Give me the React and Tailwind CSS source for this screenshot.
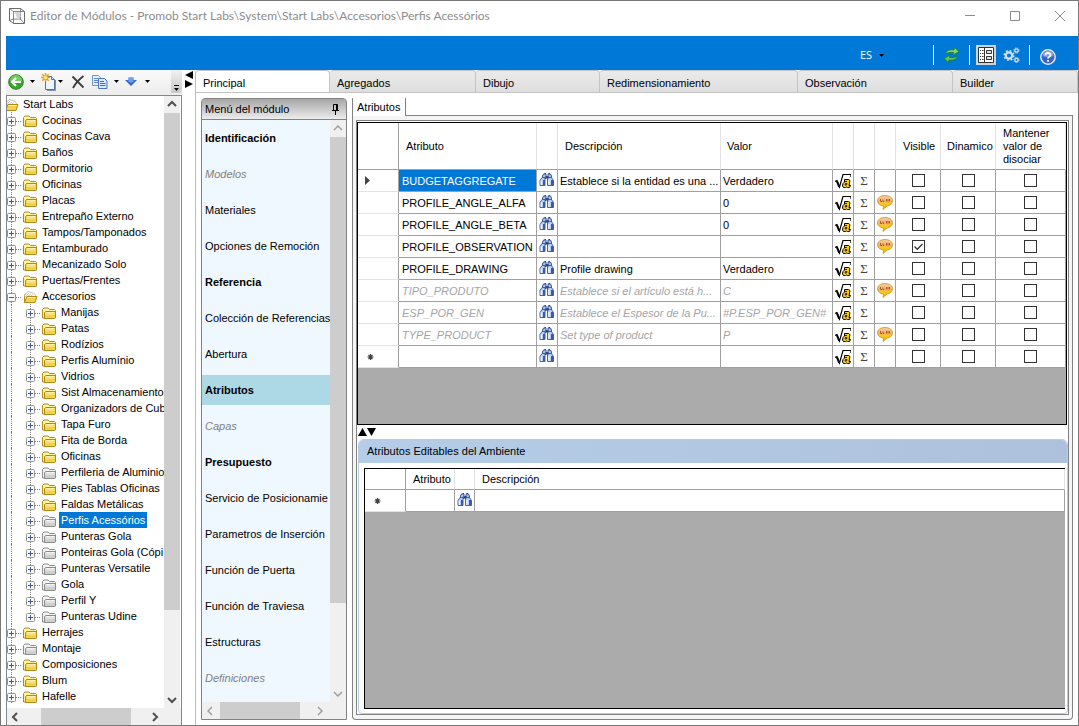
import { useState } from 'react';
import clsx from 'clsx';

const tree = [
  { name: 'Cocinas' },
  { name: 'Cocinas Cava' },
  { name: 'Baños' },
  { name: 'Dormitorio' },
  { name: 'Oficinas' },
  { name: 'Placas' },
  { name: 'Entrepaño Externo' },
  { name: 'Tampos/Tamponados' },
  { name: 'Entamburado' },
  { name: 'Mecanizado Solo' },
  { name: 'Puertas/Frentes' },
  {
    name: 'Accesorios',
    children: [
      { name: 'Manijas' },
      { name: 'Patas' },
      { name: 'Rodízios' },
      { name: 'Perfis Alumínio' },
      { name: 'Vidrios' },
      { name: 'Sist Almacenamiento' },
      { name: 'Organizadors de Cub' },
      { name: 'Tapa Furo' },
      { name: 'Fita de Borda' },
      { name: 'Oficinas' },
      { name: 'Perfileria de Aluminio', gray: true },
      { name: 'Pies Tablas Oficinas' },
      { name: 'Faldas Metálicas' },
      { name: 'Perfis Acessórios', gray: true },
      { name: 'Punteras Gola', gray: true },
      { name: 'Ponteiras Gola (Cópi', gray: true },
      { name: 'Punteras Versatile', gray: true },
      { name: 'Gola', gray: true },
      { name: 'Perfil Y', gray: true },
      { name: 'Punteras Udine', gray: true },
    ],
  },
  { name: 'Herrajes' },
  { name: 'Montaje', gray: true },
  { name: 'Composiciones' },
  { name: 'Blum' },
  { name: 'Hafelle' },
];

const menu = [
  { label: 'Identificación', kind: 'title' },
  { label: 'Modelos', kind: 'off' },
  { label: 'Materiales' },
  { label: 'Opciones de Remoción' },
  { label: 'Referencia', kind: 'title' },
  { label: 'Colección de Referencias' },
  { label: 'Abertura' },
  { label: 'Atributos', kind: 'title' },
  { label: 'Capas', kind: 'off' },
  { label: 'Presupuesto', kind: 'title' },
  { label: 'Servicio de Posicionamie' },
  { label: 'Parametros de Inserción' },
  { label: 'Función de Puerta' },
  { label: 'Función de Traviesa' },
  { label: 'Estructuras' },
  { label: 'Definiciones', kind: 'off' },
];

const tabs = [
  { label: 'Principal', size: 'w-[134px]' },
  { label: 'Agregados', size: 'w-[146px]' },
  { label: 'Dibujo', size: 'w-[124px]' },
  { label: 'Redimensionamiento', size: 'w-[198px]' },
  { label: 'Observación', size: 'w-[155px]' },
  { label: 'Builder', size: 'flex-1' },
];

const rows = [
  { name: 'BUDGETAGGREGATE', desc: 'Establece si la entidad es una ...', value: 'Verdadero', selected: true },
  { name: 'PROFILE_ANGLE_ALFA', value: '0', note: true },
  { name: 'PROFILE_ANGLE_BETA', value: '0', note: true },
  { name: 'PROFILE_OBSERVATION', note: true, visible: true },
  { name: 'PROFILE_DRAWING', desc: 'Profile drawing', value: 'Verdadero' },
  { name: 'TIPO_PRODUTO', desc: 'Establece si el artículo está h...', value: 'C', note: true, inherited: true },
  { name: 'ESP_POR_GEN', desc: 'Establece el Espesor de la Pu...', value: '#P.ESP_POR_GEN#', inherited: true },
  { name: 'TYPE_PRODUCT', desc: 'Set type of product', value: 'P', note: true, inherited: true },
  { name: '', isNew: true },
];

/* ---------- icons ---------- */

function Caret({ className }) {
  return (
    <svg width="5" height="3" viewBox="0 0 5 3" className={className} aria-hidden="true">
      <path d="M0 0h5L2.5 3z" fill="currentColor" />
    </svg>
  );
}

function Folder({ gray, open }) {
  const line = gray ? '#8c8c8c' : '#b08a1c';
  const light = gray ? '#f4f4f4' : '#fff3a8';
  const dark = gray ? '#cfcfcf' : '#f3cf4b';
  if (open) {
    return (
      <svg width="15" height="14" viewBox="0 0 15 14" className="mt-[2px] shrink-0" aria-hidden="true">
        <path d="M1.500 12.500V5l1-1h3l1 1.500h5.500v2" fill={light} stroke={line} />
        <path d="M1 6l4-4.500 6.500 2L13 7z" fill="#fff" stroke="#c4b98e" strokeWidth=".8" />
        <path d="M3.500 5.500l2-2M5.500 6l2-2M8 6.500l1.500-2" stroke="#b4b4b4" strokeWidth=".8" />
        <path d="M1.500 12.500l2.500-6h10l-2 6z" fill={dark} stroke={line} />
        <path d="M4.500 7.500h8" stroke={light} />
      </svg>
    );
  }
  return (
    <svg width="15" height="14" viewBox="0 0 15 14" className="mt-[2px] shrink-0" aria-hidden="true">
      <path d="M.5 12V3.500l1.500-1.500h4l1.500 1.500h5l1 1V12z" fill={light} stroke={line} />
      <path d="M2.500 12.500v-6l1-1h10v6l-1 1z" fill={dark} stroke={line} />
      <path d="M4 6.500h8.500M3.500 8h9" stroke={light} />
    </svg>
  );
}

function Expander({ open, last }) {
  return (
    <svg width="16" height="16" viewBox="0 0 16 16" className="shrink-0" aria-hidden="true">
      <path d={last ? 'M4.500 0v5' : 'M4.500 0v16'} stroke="#808080" strokeDasharray="1 1" />
      <path d="M9 9.500h6" stroke="#808080" strokeDasharray="1 1" />
      <rect x=".5" y="5.500" width="8" height="8" rx="1" fill="#fbfbfb" stroke="#919191" />
      <path d={open ? 'M2 9.500h5' : 'M2 9.500h5M4.500 7v5'} stroke="#3c5aa0" />
    </svg>
  );
}

function Binoculars() {
  return (
    <svg width="16" height="16" viewBox="0 0 16 16" className="mx-auto mb-[2px] block" aria-hidden="true">
      <path d="M3.500 4l1-2h2.500v4.500h-3.500zM9 2h2.500l1 2v2.500H9z" fill="#a9c3ee" stroke="#2c4a8c" strokeWidth=".9" />
      <path d="M1 13.500v-5l2-3h3v8zM8.500 13.500v-8h4l2 3v5z" fill="#b8cdf0" stroke="#35549a" strokeWidth=".9" />
      <path d="M4 8h2v5.500H4zM12 8h2.300v5.500H12z" fill="#3a5aa6" />
      <path d="M6.500 4h3v2.500h-3z" fill="#2c4a8c" />
      <path d="M2.300 8.500v4.500M9.900 8v5" stroke="#f6faff" strokeWidth="1.200" />
      <path d="M5.500 1.500h1.500M9.500 1.500H11" stroke="#2c4a8c" />
    </svg>
  );
}

function Formula() {
  return (
    <svg width="16" height="16" viewBox="0 0 16 16" className="mx-auto block" aria-hidden="true">
      <path d="M0 8.500L2 7.500l2.500 6.500L8 1.500h8V4" fill="none" stroke="#000" strokeWidth="1.200" />
      <path d="M1.800 8l2.400 6" stroke="#000" strokeWidth="2" />
      <path
        d="M9.500 6.500h4l1.500 1-1 5h1.500l-1 2h-2l-1-.5-1 .5H8.500l-1-1.500.5-2.500 1.500-1.500z"
        fill="#ffcc14"
        stroke="#000"
        strokeLinejoin="round"
      />
      <path d="M9.500 8.500h2.500M10 12l.5-1.500h1.500l-.5 1.500z" fill="none" stroke="#000" strokeWidth=".8" />
    </svg>
  );
}

function Note() {
  return (
    <svg width="16" height="16" viewBox="0 0 16 16" className="mx-auto mb-[2px] block" aria-hidden="true">
      <defs>
        <linearGradient id="note" x1="0" y1="0" x2="0" y2="1">
          <stop offset="0" stopColor="#f4cfa4" />
          <stop offset=".4" stopColor="#f2b06c" />
          <stop offset=".6" stopColor="#fdc818" />
          <stop offset="1" stopColor="#eda600" />
        </linearGradient>
      </defs>
      <path
        d="M8 1.500c4.300 0 7.500 2 7.500 5.200s-2.500 4.800-5.500 5.300l-4 3.500.5-3.500C3 11.500.5 9.800.5 6.700c0-3.200 3.200-5.200 7.500-5.200z"
        fill="url(#note)"
        stroke="#cf9420"
        strokeWidth=".8"
      />
      <path d="M3.500 5v2.500h1.500M6 5.500v2h1.200M9.500 5v2.500M11 5v2.500M12.500 5v2.500" stroke="#a8501e" fill="none" strokeWidth=".9" />
    </svg>
  );
}

function Chevron({ dir, faded }) {
  const paths = {
    up: 'M1 6l4-4 4 4',
    down: 'M1 3l4 4 4-4',
    left: 'M6 1L2 5l4 4',
    right: 'M3 1l4 4-4 4',
  };
  return (
    <svg width="10" height="10" viewBox="0 0 10 10" aria-hidden="true">
      <path d={paths[dir]} fill="none" stroke={faded ? '#9b9b9b' : '#505050'} strokeWidth={faded ? 1.4 : 2} />
    </svg>
  );
}

function VScroll({ faded, thumb }) {
  return (
    <div className="flex w-4 shrink-0 flex-col bg-[#f0f0f0]">
      <button type="button" aria-label="Subir" className="flex h-[17px] items-center justify-center">
        <Chevron dir="up" faded={faded} />
      </button>
      <div className="min-h-0 flex-1">
        <div className={clsx('bg-[#cdcdcd]', thumb)} />
      </div>
      <button type="button" aria-label="Bajar" className="flex h-[17px] items-center justify-center">
        <Chevron dir="down" faded={faded} />
      </button>
    </div>
  );
}

function HScroll({ faded, thumb }) {
  return (
    <div className="flex h-[17px] min-w-0 flex-1 bg-[#f0f0f0]">
      <button type="button" aria-label="Izquierda" className="flex w-[18px] items-center justify-center">
        <Chevron dir="left" faded={faded} />
      </button>
      <div className="min-w-0 flex-1">
        <div className={clsx('h-full bg-[#cdcdcd]', thumb)} />
      </div>
      <button type="button" aria-label="Derecha" className="flex w-[18px] items-center justify-center">
        <Chevron dir="right" faded={faded} />
      </button>
    </div>
  );
}

/* ---------- window chrome ---------- */

function TitleBar() {
  return (
    <header className="flex h-[35px] shrink-0 items-center bg-white pr-3 pb-[5px] pl-2">
      <svg width="16" height="16" viewBox="0 0 16 16" fill="none" stroke="#6a6a6a" className="shrink-0" aria-hidden="true">
        <path d="M.5.500h11l4 3v12h-11l-4-3z" />
        <path d="M4.500 3.500h11M4.500 3.500v12M.5.500l4 3M11.500.500v11M.5 12.500l4-1.500h7l3.500 4" strokeWidth=".8" />
        <path d="M5.500 4h6v5l-3 2z" fill="#d5d5d5" stroke="none" />
      </svg>
      <h1 className="ml-[5px] flex-1 truncate font-['Lato',sans-serif] text-[12px] text-[#8c8c8c]">
        Editor de Módulos - Promob Start Labs\System\Start Labs\Accesorios\Perfis Acessórios
      </h1>
      <div className="flex gap-[33px] text-[#8c8c8c]">
        <button type="button" aria-label="Minimizar">
          <svg width="12" height="12" viewBox="0 0 12 12" stroke="currentColor"><path d="M1 5.500h10" /></svg>
        </button>
        <button type="button" aria-label="Maximizar">
          <svg width="12" height="12" viewBox="0 0 12 12" stroke="currentColor" fill="none"><path d="M1.500 1.500h9v9h-9z" /></svg>
        </button>
        <button type="button" aria-label="Cerrar">
          <svg width="12" height="12" viewBox="0 0 12 12" stroke="currentColor"><path d="M1 1l10 10M11 1L1 11" /></svg>
        </button>
      </div>
    </header>
  );
}

function TopBar() {
  return (
    <div className="ml-[5px] flex h-[34px] shrink-0 items-center justify-end bg-[#0078d7] pt-1 pr-[22px] text-white">
      <label className="relative mr-[49px] flex items-center">
        <select
          aria-label="Idioma"
          defaultValue="ES"
          className="w-6 appearance-none bg-transparent font-['Open_Sans',sans-serif] text-[11px] text-white"
        >
          <option>ES</option>
        </select>
        <Caret className="pointer-events-none absolute right-0 text-black" />
      </label>
      <span className="h-5 w-px bg-white" />
      <button type="button" aria-label="Actualizar" className="mx-[9px]">
        <svg width="17" height="16" viewBox="0 0 17 16" className="block" aria-hidden="true">
          <path d="M2.500 6.500C4 3 7 2.500 11 3L11.500.500 16 4.500 10 8l.5-2.500C7 5 5 6 2.500 6.500z" fill="#7ddb6c" stroke="#1d7d28" strokeWidth=".8" />
          <path d="M14.500 9.500C13 13 10 13.500 6 13l-.5 2.500L1 11.500 7 8l-.5 2.500c3.500.5 5.500-.5 8-1z" fill="#5cc74e" stroke="#1d7d28" strokeWidth=".8" />
        </svg>
      </button>
      <span className="h-5 w-px bg-white" />
      <button type="button" aria-label="Paneles" className="ml-[6px] flex h-5 w-5 items-center justify-center bg-[#ccd3df]">
        <svg width="16" height="16" viewBox="0 0 16 16" fill="none" stroke="#333" aria-hidden="true">
          <path d="M.5.500h15v15H.5z" fill="#fff" />
          <path d="M6.500.500v15" />
          <path d="M2 3.500h1M2 6.500h1M2 9.500h1M2 12.500h1M4 3.500h1.500M4 6.500h1.500M4 9.500h1.500M4 12.500h1.500" />
          <path d="M8.500 3.500h5v3h-5zM8.500 9.500h5v3h-5z" fill="#e4e4e4" />
        </svg>
      </button>
      <button type="button" aria-label="Configuración" className="mr-2 ml-[7px]">
        <svg width="18" height="17" viewBox="0 0 18 17" fill="none" stroke="#d6dde8" className="block" aria-hidden="true">
          <circle cx="6" cy="8.500" r="3.200" strokeWidth="2.200" />
          <circle cx="6" cy="8.500" r="4.800" strokeWidth="1.600" strokeDasharray="1.885 1.885" />
          <circle cx="13.500" cy="3.500" r="1.700" strokeWidth="1.300" />
          <circle cx="13.500" cy="3.500" r="2.600" strokeDasharray="1.020 1.020" />
          <circle cx="13.500" cy="13" r="1.700" strokeWidth="1.300" />
          <circle cx="13.500" cy="13" r="2.600" strokeDasharray="1.020 1.020" />
        </svg>
      </button>
      <span className="h-5 w-px bg-white" />
      <button type="button" aria-label="Ayuda" className="ml-[10px] pt-1">
        <svg width="16" height="16" viewBox="0 0 16 16" className="block" aria-hidden="true">
          <circle cx="8" cy="8" r="7.200" fill="#3a63c8" stroke="#e4eaf8" strokeWidth="1.500" />
          <path d="M2.500 7a5.500 5.500 0 0 1 11 0c-3 1.500-8 1.500-11 0z" fill="#7f9fe4" />
          <path d="M5.500 6.200c0-3 5-3 5-.2 0 1.700-2.500 1.700-2.500 3.500M8 11v1.800" fill="none" stroke="#fff" strokeWidth="1.800" />
        </svg>
      </button>
    </div>
  );
}

/* ---------- left column ---------- */

function ToolBar() {
  return (
    <div className="flex h-[25px] shrink-0 items-center bg-gradient-to-b from-[#fafafa] to-[#ececec] pb-[2px] pl-[2px]">
      <button type="button" aria-label="Volver">
        <svg width="16" height="16" viewBox="0 0 16 16" className="block" aria-hidden="true">
          <circle cx="8" cy="8" r="7.300" fill="#39a52c" stroke="#2c8424" />
          <path d="M2 7a6 6 0 0 1 12 0c-3 1.500-9 1.500-12 0z" fill="#6fce5c" />
          <path d="M13 8H4.500M8 4L4 8l4 4" fill="none" stroke="#fff" strokeWidth="2.200" />
        </svg>
      </button>
      <Caret className="mx-[6px]" />
      <button type="button" aria-label="Nuevo">
        <svg width="15" height="18" viewBox="0 0 15 18" className="block" aria-hidden="true">
          <path d="M4.500 3.500h6l3 3v10h-9z" fill="#eef4fd" stroke="#5c6f8f" />
          <path d="M10.500 3.500v3h3" fill="#cfdcf0" stroke="#5c6f8f" />
          <path d="M14.500 7v10.500H6" fill="none" stroke="#7f8fae" />
          <path d="M4.500 0v9M0 4.500h9M1.300 1.300l6.400 6.400M7.700 1.300L1.300 7.700" stroke="#f09a12" strokeWidth="1.500" />
          <circle cx="4.500" cy="4.500" r="2" fill="#ffe25a" />
        </svg>
      </button>
      <Caret className="mr-2 ml-[2px]" />
      <button type="button" aria-label="Eliminar">
        <svg width="14" height="14" viewBox="0 0 14 14" className="block" aria-hidden="true">
          <path d="M1.500 1.500c3 3 7 7 11 11" stroke="#3c3c3c" strokeWidth="1.800" fill="none" />
          <path d="M12.500 1c-4 3-8 7-10.500 12" stroke="#3c3c3c" strokeWidth="1.800" fill="none" />
        </svg>
      </button>
      <button type="button" aria-label="Copiar" className="ml-[7px]">
        <svg width="16" height="14" viewBox="0 0 16 14" className="block" aria-hidden="true">
          <path d="M.5.500h6l2 2v8h-8z" fill="#eaf2ff" stroke="#6e92d4" />
          <path d="M2 3.500h4M2 5.500h5M2 7.500h5" stroke="#5d86d0" />
          <path d="M6.500 3.500h6l2.500 2.500v7.500H6.500z" fill="#dbe8fd" stroke="#4a74c0" />
          <path d="M8 6.500h4M8 8.500h5.500M8 10.500h5.500" stroke="#3f6cc0" />
        </svg>
      </button>
      <Caret className="mx-[6px]" />
      <button type="button" aria-label="Mover abajo">
        <svg width="12" height="9" viewBox="0 0 12 9" className="block" aria-hidden="true">
          <path d="M3.500.500h5V3H12L6 9 0 3h3.500z" fill="#2f69cc" />
          <path d="M4 1h4v2.500h2L6 6 2 3.500h2z" fill="#6f9eea" />
        </svg>
      </button>
      <Caret className="ml-2" />
      <button
        type="button"
        aria-label="Más opciones"
        className="ml-auto flex h-full w-[11px] flex-col items-center justify-end gap-[2px] rounded-r bg-gradient-to-b from-[#f2f2f2] to-[#c8c8c8] pb-[2px]"
      >
        <span className="h-px w-[5px] bg-black" />
        <Caret />
      </button>
    </div>
  );
}

function TreeRow({ node, open, child, last, selected, onSelect }) {
  return (
    <li className="flex h-4 items-center">
      {child && <span className="ml-[4px] h-full w-[15px] shrink-0 border-l border-dotted border-[#808080]" />}
      <Expander open={open} last={last} />
      <Folder gray={node.gray} open={open} />
      <button
        type="button"
        onClick={() => onSelect(node.name)}
        className={clsx('ml-[2px] h-4 px-[2px] leading-4 whitespace-nowrap', selected && 'bg-[#0078d7] text-white')}
      >
        {node.name}
      </button>
    </li>
  );
}

function TreePanel() {
  const [current, setCurrent] = useState('Perfis Acessórios');
  return (
    <aside className="flex w-44 shrink-0 flex-col">
      <ToolBar />
      <div className="flex min-h-0 flex-1 flex-col border border-b-0 border-[#828790] bg-white">
        <div className="flex min-h-0 flex-1 pr-px">
          <ul className="min-w-0 flex-1 overflow-hidden">
            <li className="flex h-4 items-center">
              <span className="flex w-3 justify-end overflow-hidden"><Folder open /></span>
              <span className="ml-1">Start Labs</span>
            </li>
            {tree.map((node) => (
              <li key={node.name}>
                <ul>
                  <TreeRow node={node} open={!!node.children} selected={current === node.name && !node.children} onSelect={setCurrent} />
                  {node.children?.map((sub, i) => (
                    <TreeRow
                      key={sub.name}
                      node={sub}
                      child
                      last={i === node.children.length - 1}
                      selected={current === sub.name}
                      onSelect={setCurrent}
                    />
                  ))}
                </ul>
              </li>
            ))}
          </ul>
          <VScroll thumb="h-[86%]" />
        </div>
        <div className="flex">
          <HScroll thumb="ml-[13%] w-[75%]" />
          <span className="w-[17px] bg-[#f0f0f0]" />
        </div>
      </div>
    </aside>
  );
}

/* ---------- module menu ---------- */

function ModuleMenu() {
  const [current, setCurrent] = useState('Atributos');
  return (
    <nav className="flex w-[146px] shrink-0 flex-col rounded-t-sm border border-[#828282]">
      <div className="flex h-[21px] shrink-0 items-center justify-between border-b border-[#828282] bg-gradient-to-b from-[#a6a6a6] to-[#ededed] pr-[7px] pl-[3px]">
        <h2>Menú del módulo</h2>
        <button type="button" aria-label="Fijar">
          <svg width="7" height="11" viewBox="0 0 7 11" fill="none" stroke="#000" aria-hidden="true">
            <path d="M1.500 6V.500h4V6M0 6.500h7M3.500 7v4M4.500 1v5" />
          </svg>
        </button>
      </div>
      <div className="flex min-h-0 flex-1 bg-[#f0f8ff]">
        <ul className="flex min-w-0 flex-1 flex-col gap-[6px] overflow-hidden pt-[3px]">
          {menu.map((item) => (
            <li key={item.label} className="shrink-0">
              <button
                type="button"
                onClick={() => setCurrent(item.label)}
                className={clsx(
                  'h-[30px] w-full pl-[3px] text-left whitespace-nowrap',
                  item.kind === 'title' && 'font-bold',
                  item.kind === 'off' && 'text-[#808080] italic',
                  current === item.label && 'bg-[#add8e6]'
                )}
              >
                {item.label}
              </button>
            </li>
          ))}
        </ul>
        <VScroll faded thumb="h-[85%]" />
      </div>
      <div className="flex">
        <HScroll faded thumb="w-[88%]" />
        <span className="w-[17px] bg-[#f0f0f0]" />
      </div>
    </nav>
  );
}

/* ---------- grids ---------- */

const headCell = 'border-r border-b border-r-[#e3e3e3] border-b-[#a0a0a0] bg-white text-left font-normal';
const rowHead = 'border-r border-b border-r-[#a0a0a0] border-b-[#e3e3e3] bg-white pl-[7px] text-left';
const cell = 'h-[22px] border-r border-b border-[#a0a0a0] bg-white whitespace-nowrap';

function RowMark({ row }) {
  if (row.selected) {
    return (
      <svg width="5" height="9" viewBox="0 0 5 9" aria-hidden="true"><path d="M0 0l5 4.500L0 9z" fill="#444" /></svg>
    );
  }
  if (row.isNew) {
    return (
      <svg width="7" height="6" viewBox="0 0 7 6" stroke="#444" strokeWidth="1.200" className="ml-[2px]" aria-hidden="true">
        <path d="M3.500 0v6M.5 3h6M1.500 1l4 4M5.500 1l-4 4" />
      </svg>
    );
  }
  return null;
}

function Tick({ label, checked }) {
  return (
    <span className="mx-auto grid size-[13px]">
      <input
        type="checkbox"
        aria-label={label}
        defaultChecked={checked}
        className="peer col-start-1 row-start-1 size-[13px] appearance-none border border-[#333] bg-white"
      />
      <svg width="13" height="13" viewBox="0 0 13 13" className="pointer-events-none col-start-1 row-start-1 hidden peer-checked:block" aria-hidden="true">
        <path d="M2.500 6.500l2.800 2.800L10.500 4" fill="none" stroke="#333" strokeWidth="1.300" />
      </svg>
    </span>
  );
}

function AttributeGrid() {
  return (
    <div className="mt-px mr-px h-[303px] shrink-0 overflow-hidden border border-black bg-[#ababab]">
      <table className="w-full table-fixed border-separate border-spacing-0">
        <colgroup>
          <col className="w-[41px]" />
          <col className="w-[138px]" />
          <col className="w-[21px]" />
          <col />
          <col className="w-[112px]" />
          <col className="w-[21px]" />
          <col className="w-[21px]" />
          <col className="w-[21px]" />
          <col className="w-[45px]" />
          <col className="w-[55px]" />
          <col className="w-[70px]" />
        </colgroup>
        <thead>
          <tr className="h-[47px]">
            <th className="border-r border-b border-[#a0a0a0] bg-white" />
            <th className={clsx(headCell, 'pl-[7px]')}>Atributo</th>
            <th className={headCell} />
            <th className={clsx(headCell, 'pl-[7px]')}>Descripción</th>
            <th className={clsx(headCell, 'pl-[6px]')}>Valor</th>
            <th className={headCell} />
            <th className={headCell} />
            <th className={headCell} />
            <th className={clsx(headCell, 'pl-[7px]')}>Visible</th>
            <th className={clsx(headCell, 'pl-[6px]')}>Dinamico</th>
            <th className={clsx(headCell, 'pl-[7px] leading-[13px]')}>Mantener valor de disociar</th>
          </tr>
        </thead>
        <tbody>
          {rows.map((row) => {
            const text = row.inherited && 'text-[#a5a5a5] italic';
            return (
              <tr key={row.name}>
                <th className={rowHead}><RowMark row={row} /></th>
                <td className={clsx(cell, 'pl-[3px]', text, row.selected && 'bg-[#0078d7]! text-white')}>{row.name}</td>
                <td className={cell}><Binoculars /></td>
                <td className={clsx(cell, 'pl-[2px]', text)}>{row.desc}</td>
                <td className={clsx(cell, 'pl-[2px]', text)}>{row.value}</td>
                <td className={cell}><Formula /></td>
                <td className={clsx(cell, "text-center font-['Liberation_Serif',serif] text-[13px] leading-4 text-[#444]")}>Σ</td>
                <td className={cell}>{row.note && <Note />}</td>
                <td className={cell}><Tick label="Visible" checked={row.visible} /></td>
                <td className={cell}><Tick label="Dinamico" /></td>
                <td className={cell}><Tick label="Mantener valor de disociar" /></td>
              </tr>
            );
          })}
        </tbody>
      </table>
    </div>
  );
}

function EnvironmentPanel() {
  return (
    <section className="ml-px flex min-h-0 flex-1 flex-col rounded-t-[6px] rounded-b-[4px] border border-[#b5cde8] bg-white">
      <h3 className="flex h-[23px] shrink-0 items-center rounded-t-[5px] bg-gradient-to-r from-[#b5cde8] to-[#aec1dc] pb-[2px] pl-2">
        Atributos Editables del Ambiente
      </h3>
      <div className="mt-[5px] mr-[2px] mb-1 ml-[5px] min-h-0 flex-1 overflow-hidden border border-r-0 border-black bg-[#ababab]">
        <table className="w-full table-fixed border-separate border-spacing-0">
          <colgroup>
            <col className="w-[41px]" />
            <col className="w-[49px]" />
            <col className="w-[20px]" />
            <col />
          </colgroup>
          <thead>
            <tr className="h-[21px]">
              <th className="border-r border-b border-[#a0a0a0] bg-white" />
              <th className={clsx(headCell, 'pl-[7px]')}>Atributo</th>
              <th className={headCell} />
              <th className={clsx(headCell, 'pl-[7px]')}>Descripción</th>
            </tr>
          </thead>
          <tbody>
            <tr>
              <th className={rowHead}><RowMark row={{ isNew: true }} /></th>
              <td className={cell} />
              <td className={cell}><Binoculars /></td>
              <td className={cell} />
            </tr>
          </tbody>
        </table>
      </div>
    </section>
  );
}

function AttributesPage() {
  return (
    <section className="ml-[5px] flex min-w-0 flex-1 flex-col">
      <div className="flex h-[18px] shrink-0">
        <h2 className="w-[54px] border-x border-[#828282] pl-1 leading-[18px]">Atributos</h2>
        <span className="flex-1 border-b border-[#828282]" />
      </div>
      <div className="flex min-h-0 flex-1 flex-col rounded-b-sm border border-t-0 border-[#828282] bg-[#f5f5f5] px-[3px] py-1">
        <div className="flex min-h-0 flex-1 flex-col border border-[#828282] bg-white">
          <AttributeGrid />
          <div className="flex h-[14px] shrink-0 pt-[2px] pl-px">
            <button type="button" aria-label="Contraer arriba" className="h-[9px]">
              <svg width="9" height="8" viewBox="0 0 9 8" className="block" aria-hidden="true"><path d="M4.500 0L9 8H0z" /></svg>
            </button>
            <button type="button" aria-label="Contraer abajo" className="h-[9px]">
              <svg width="9" height="8" viewBox="0 0 9 8" className="block" aria-hidden="true"><path d="M0 0h9L4.500 8z" /></svg>
            </button>
          </div>
          <EnvironmentPanel />
        </div>
      </div>
    </section>
  );
}

function App() {
  const [tab, setTab] = useState('Principal');
  return (
    <div className="flex h-screen flex-col overflow-hidden border border-[#787878] bg-white font-['Liberation_Sans',Arial,sans-serif] text-[11px] leading-4 text-black">
      <TitleBar />
      <TopBar />
      <div className="ml-[5px] flex min-h-0 flex-1">
        <TreePanel />

        {/* splitter */}
        <div className="flex w-[13px] shrink-0 flex-col items-center pt-px">
          <button type="button" aria-label="Contraer izquierda">
            <svg width="8" height="9" viewBox="0 0 8 9" className="block" aria-hidden="true"><path d="M8 0v8L0 4z" /></svg>
          </button>
          <button type="button" aria-label="Contraer derecha">
            <svg width="8" height="9" viewBox="0 0 8 9" className="block" aria-hidden="true"><path d="M0 0v8l8-4z" /></svg>
          </button>
        </div>

        <main className="flex min-w-0 flex-1 flex-col rounded-tl border-l border-[#bdbdbd]">
          <div role="tablist" className="flex h-[23px] shrink-0">
            {tabs.map((t) => (
              <button
                key={t.label}
                type="button"
                role="tab"
                aria-selected={tab === t.label}
                onClick={() => setTab(t.label)}
                className={clsx(
                  'rounded-t border-t border-r border-b border-[#c4c4c4] pt-[2px] pl-[7px] text-left',
                  t.size,
                  tab === t.label ? 'bg-white' : 'bg-gradient-to-b from-[#ebebeb] to-[#dedede]'
                )}
              >
                {t.label}
              </button>
            ))}
          </div>
          <div className="flex min-h-0 flex-1 p-[5px]">
            <ModuleMenu />
            <AttributesPage />
          </div>
        </main>
      </div>
    </div>
  );
}

export default App;
